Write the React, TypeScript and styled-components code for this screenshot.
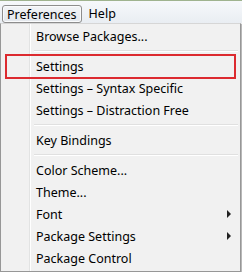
import React from 'react';
import styled, {createGlobalStyle} from 'styled-components';

const GlobalStyle = createGlobalStyle`
	html, body {
		margin: 0;
		padding: 0;
		background: #f0f0f0;
	}
	body {
		font-family: "Noto Sans", "Liberation Sans", sans-serif;
		font-size: 12.5px;
		color: #000;
	}
`;

const Window = styled.div({
	width: 242,
	height: 272,
	display: 'flex',
	flexDirection: 'column',
	overflow: 'hidden',
	background: '#f0f0f0',
});

const MenuBar = styled.div({
	height: 22,
	borderTop: '1px solid #9fb38f',
	background: 'linear-gradient(#f6f8fb, #e9edf2)',
	display: 'flex',
	alignItems: 'flex-end',
	paddingLeft: 2,
	gap: 2,
});

const BarItem = styled.div<{open?: boolean}>(props => ({
	height: props.open ? 16 : 18,
	padding: '0 4px',
	display: 'flex',
	alignItems: 'center',
	fontSize: 12.5,
	border: props.open ? '1px solid #8d8d8d' : '1px solid transparent',
	borderRadius: 3,
	background: props.open ? 'linear-gradient(#f2f4f7, #e3e7ec)' : 'transparent',
	boxShadow: props.open ? 'inset 0 0 0 1px #fafbfc' : undefined,
}));

const Dropdown = styled.div({
	position: 'relative',
	flex: 1,
	marginRight: 1,
	borderLeft: '1px solid #979797',
	borderRight: '1px solid #979797',
	borderBottom: '1px solid #979797',
	borderTop: '1px solid #d6d6d6',
	background: '#f1f1f1',
	padding: '1px 2px 0 2px',
	display: 'flex',
	flexDirection: 'column',
	boxShadow: '1px 1px 0 #b8b8b8',
});

const Gutter = styled.div({
	position: 'absolute',
	top: 0,
	bottom: 0,
	left: 28,
	width: 1,
	background: '#e2e3e3',
	borderRight: '1px solid #ffffff',
});

const Item = styled.div({
	position: 'relative',
	height: 22,
	display: 'flex',
	alignItems: 'center',
	paddingLeft: 33,
	paddingRight: 5,
	whiteSpace: 'nowrap',
});

const Label = styled.span({
	flex: 1,
});

const Arrow = styled.span({
	width: 0,
	height: 0,
	borderTop: '4px solid transparent',
	borderBottom: '4px solid transparent',
	borderLeft: '4px solid #222',
	marginRight: 2,
});

const Separator = styled.div({
	height: 8,
	display: 'flex',
	flexDirection: 'column',
	justifyContent: 'center',
	paddingLeft: 31,
	'&::before': {
		content: '""',
		height: 1,
		background: '#e0e0e0',
	},
	'&::after': {
		content: '""',
		height: 1,
		background: '#ffffff',
	},
});

const Highlight = styled.div({
	position: 'absolute',
	left: 2,
	right: 2,
	top: -1,
	bottom: -2,
	border: '2px solid #dc2a2f',
	pointerEvents: 'none',
});

type Entry = {label?: string; sub?: boolean; mark?: boolean};

const entries: Entry[] = [
	{label: 'Browse Packages...'},
	{},
	{label: 'Settings', mark: true},
	{label: 'Settings – Syntax Specific'},
	{label: 'Settings – Distraction Free'},
	{},
	{label: 'Key Bindings'},
	{},
	{label: 'Color Scheme...'},
	{label: 'Theme...'},
	{label: 'Font', sub: true},
	{label: 'Package Settings', sub: true},
	{label: 'Package Control'},
];

export default function App() {
	return (
		<Window>
			<GlobalStyle />
			<MenuBar>
				<BarItem open>Preferences</BarItem>
				<BarItem>Help</BarItem>
			</MenuBar>
			<Dropdown>
				<Gutter />
				{entries.map((entry, i) =>
					entry.label ? (
						<Item key={i}>
							<Label>{entry.label}</Label>
							{entry.sub && <Arrow />}
							{entry.mark && <Highlight />}
						</Item>
					) : (
						<Separator key={i} />
					),
				)}
			</Dropdown>
		</Window>
	);
}
